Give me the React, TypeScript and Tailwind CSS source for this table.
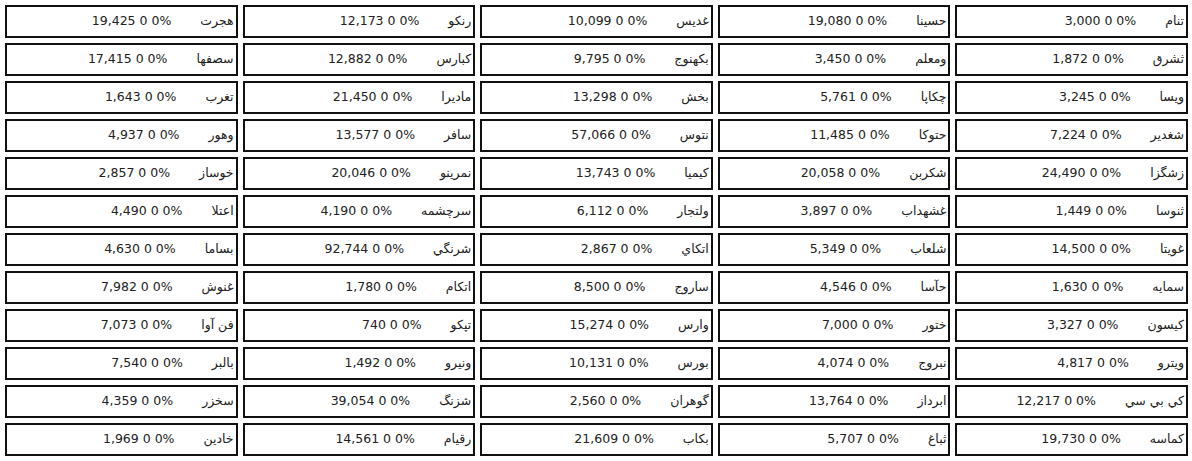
const rows: [string, string][][] = [
  [["تنام", "3,000"], ["حسینا", "19,080"], ["غدیس", "10,099"], ["رنکو", "12,173"], ["هجرت", "19,425"]],
  [["ثشرق", "1,872"], ["ومعلم", "3,450"], ["بکهنوج", "9,795"], ["کبارس", "12,882"], ["سصفها", "17,415"]],
  [["ویسا", "3,245"], ["چکاپا", "5,761"], ["بخش", "13,298"], ["مادیرا", "21,450"], ["تغرب", "1,643"]],
  [["شغدیر", "7,224"], ["حتوکا", "11,485"], ["نتوس", "57,066"], ["سافر", "13,577"], ["وهور", "4,937"]],
  [["زشگزا", "24,490"], ["شکربن", "20,058"], ["کیمیا", "13,743"], ["نمرینو", "20,046"], ["خوساز", "2,857"]],
  [["ثنوسا", "1,449"], ["غشهداب", "3,897"], ["ولتجار", "6,112"], ["سرچشمه", "4,190"], ["اعتلا", "4,490"]],
  [["غویتا", "14,500"], ["شلعاب", "5,349"], ["اتکاي", "2,867"], ["شرنگي", "92,744"], ["بساما", "4,630"]],
  [["سمایه", "1,630"], ["حآسا", "4,546"], ["ساروج", "8,500"], ["اتکام", "1,780"], ["غنوش", "7,982"]],
  [["کیسون", "3,327"], ["ختور", "7,000"], ["وارس", "15,274"], ["تپکو", "740"], ["فن آوا", "7,073"]],
  [["ویترو", "4,817"], ["نبروج", "4,074"], ["بورس", "10,131"], ["ونیرو", "1,492"], ["بالبر", "7,540"]],
  [["کي بي سي", "12,217"], ["ابرداز", "13,764"], ["گوهران", "2,560"], ["شزنگ", "39,054"], ["سخزر", "4,359"]],
  [["کماسه", "19,730"], ["ثباغ", "5,707"], ["بکاب", "21,609"], ["رقیام", "14,561"], ["خادین", "1,969"]],
];

function Cell({ name, value }: { name: string; value: string }) {
  return (
    <div dir="rtl" className="flex h-[33px] items-center border-2 border-[#111] bg-white pr-[2px]">
      <span className="text-[12.5px] text-[#222]">{name}</span>
      <span dir="ltr" className="mr-[29px] text-[12.5px] text-[#222]">
        {value} 0 0%
      </span>
    </div>
  );
}

export default function App() {
  return (
    <div className="h-[461px] w-[1192px] overflow-hidden bg-white font-['DejaVu_Sans',sans-serif]">
      <div dir="rtl" className="grid grid-cols-5 gap-[5px] pl-[5px] pr-[4px] pt-[5px]">
        {rows.flat().map(([name, value], i) => (
          <Cell key={i} name={name} value={value} />
        ))}
      </div>
    </div>
  );
}
